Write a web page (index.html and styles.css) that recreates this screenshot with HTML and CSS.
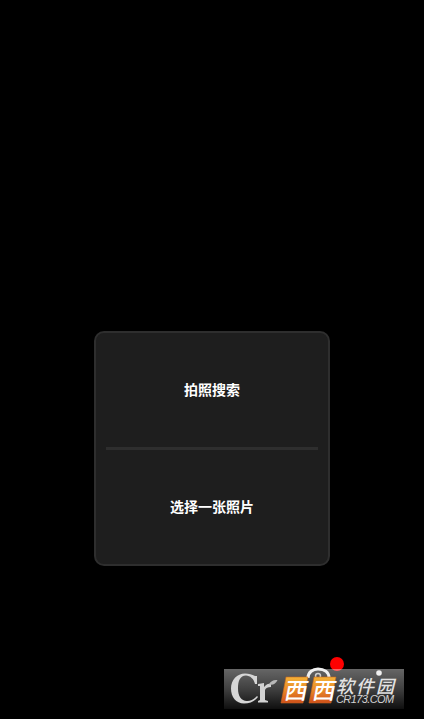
FILE: index.html
```html
<!DOCTYPE html>
<html lang="zh">
<head>
<meta charset="utf-8">
<title>拍照搜索</title>
<link rel="stylesheet" href="styles.css">
</head>
<body>
<main class="screen">
  <section class="dialog">
    <div class="option">拍照搜索</div>
    <div class="divider"></div>
    <div class="option">选择一张照片</div>
  </section>
</main>
<span class="mark-dot"></span>
<aside class="watermark">
  <svg class="mark-art" width="180" height="40" viewBox="0 0 180 40" aria-hidden="true">
    <defs>
      <linearGradient id="badge" x1="0" y1="0" x2="0" y2="1">
        <stop offset="0" stop-color="#f4b238"/>
        <stop offset="0.5" stop-color="#e98a28"/>
        <stop offset="1" stop-color="#cf4f1a"/>
      </linearGradient>
    </defs>
    <path fill-rule="evenodd" fill="#d6d6d6" d="M21 4.500C25 4.500 28 5.500 31 7L33 7V15H31C30 10 26 6.500 22 6.500C16 6.500 14 12 14 19.500C14 27 17 32 23 32C27 32 30 30 33 27L34 28C31 32 26 34.500 20 34.500C12 34.500 7 28 7 19.500C7 11 13 4.500 21 4.500Z"/>
    <path fill="#d2d2d2" d="M34 15L40 14V18C42 15.500 44 14.500 47 14.500V18C44 18 41.500 19 41 21V31L44 32V33.500H34V32L36 31V17L34 17Z"/>
    <path fill="#b8b8b8" d="M45 15.500C46.500 12 49.500 10.500 53.500 11C52 14.500 49 16.500 45 15.500Z"/>
    <path d="M84 9C84 3 89 0 94 0C100 0 105 3 105 9" fill="none" stroke="#f0f0f0" stroke-width="3"/>
    <circle cx="94" cy="7" r="2.500" fill="none" stroke="#d0d0d0" stroke-width="1.500"/>
    <path d="M62 8H84L79 34H57Z" fill="url(#badge)" stroke="#c8641e" stroke-width="0.600"/>
    <path d="M90 8H112L107 34H85Z" fill="url(#badge)" stroke="#c8641e" stroke-width="0.600"/>
    <text class="badge-text" x="0" y="0" transform="translate(59.500 30) skewX(-11)">西</text>
    <text class="badge-text" x="0" y="0" transform="translate(87.500 30) skewX(-11)">西</text>
    <circle cx="155" cy="4" r="2.800" fill="#f0f0f0"/>
  </svg>
  <span class="mark-cn">软件园</span>
  <span class="mark-en">CR173.COM</span>
</aside>
</body>
</html>
```
FILE: styles.css
```css
* { box-sizing: border-box; }
html, body { margin: 0; height: 100%; }
body {
  background: #000;
  overflow: hidden;
  font-family: "Noto Sans CJK SC", "Liberation Sans", sans-serif;
}
.screen {
  height: 719px;
  display: flex;
  justify-content: center;
  padding-top: 331px;
}
.dialog {
  width: 236px;
  height: 235px;
  background: #1e1e1e;
  border: 2px solid #2e2e2e;
  border-radius: 10px;
  padding: 0 10px;
  display: flex;
  flex-direction: column;
}
.option {
  flex: 1;
  display: flex;
  align-items: center;
  justify-content: center;
  padding-bottom: 2px;
  color: #fff;
  font-size: 14px;
  font-weight: 700;
  line-height: 20px;
}
.divider {
  height: 3px;
  background: #2e2e2e;
}
.watermark {
  position: absolute;
  left: 224px;
  top: 669px;
  width: 180px;
  height: 40px;
  background: linear-gradient(rgba(255, 255, 255, 0.4), rgba(255, 255, 255, 0.25) 50%, rgba(255, 255, 255, 0.06));
}
.mark-art {
  position: absolute;
  left: 0;
  top: 0;
  overflow: visible;
}
.badge-text {
  fill: #fff;
  font-family: "Noto Sans CJK SC", sans-serif;
  font-size: 23px;
  font-weight: 500;
}
.mark-cn {
  position: absolute;
  left: 114px;
  top: 6px;
  color: #e2e2e2;
  font-size: 18px;
  font-weight: 500;
  line-height: 20px;
  letter-spacing: 2px;
  white-space: nowrap;
  transform: skewX(-14deg);
}
.mark-en {
  position: absolute;
  left: 112px;
  top: 24px;
  color: #d4d4d4;
  font-family: "Liberation Sans", sans-serif;
  font-size: 11px;
  font-style: italic;
  line-height: 12px;
  letter-spacing: -0.6px;
  white-space: nowrap;
}
.mark-dot {
  position: absolute;
  left: 330px;
  top: 657px;
  width: 14px;
  height: 14px;
  border-radius: 50%;
  background: #fe0000;
}
```
